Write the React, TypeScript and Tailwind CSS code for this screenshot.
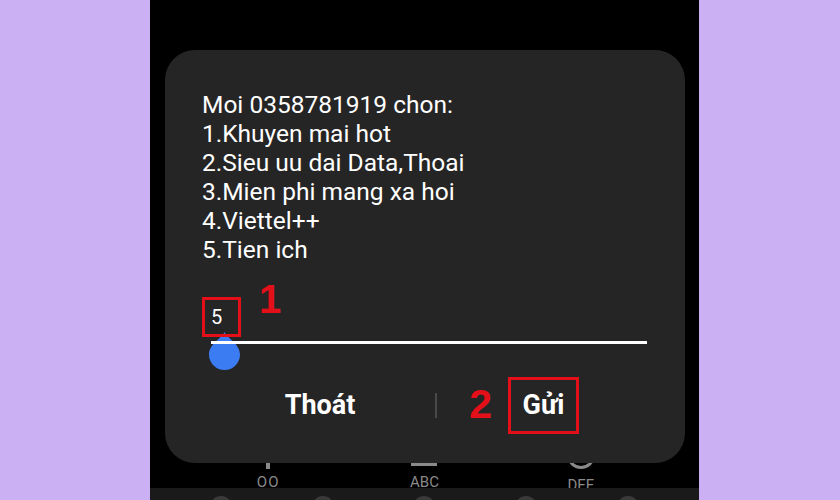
import React from "react";

const lines = [
  "Moi 0358781919 chon:",
  "1.Khuyen mai hot",
  "2.Sieu uu dai Data,Thoai",
  "3.Mien phi mang xa hoi",
  "4.Viettel++",
  "5.Tien ich",
];

function Thumb() {
  return (
    <svg
      className="absolute left-[44px] top-[35px]"
      width="31"
      height="38"
      viewBox="0 0 31 38"
    >
      <path
        d="M15.5 0 C18 6 31 12 31 22.5 A15.5 15.5 0 1 1 0 22.5 C0 12 13 6 15.5 0 Z"
        fill="#3b7cf2"
      />
    </svg>
  );
}

function UssdDialog() {
  return (
    <div
      className="h-[413px] rounded-[30px] bg-[#252525] text-white"
      style={{ fontFamily: "Roboto, 'Noto Sans', sans-serif" }}
    >
      <div className="pt-[40px] pl-[37px] text-[24.5px] leading-[29px]">
        {lines.map((l) => (
          <div key={l}>{l}</div>
        ))}
      </div>

      {/* input */}
      <div className="relative mt-[33px] h-[80px]">
        <div className="h-[40px] pt-[8px] pl-[46px] text-[20px] leading-[24px]">5</div>
        <Thumb />
        <div className="relative ml-[46px] mt-[4px] h-[3px] w-[436px] bg-white" />
        <div className="absolute left-[37px] top-0 h-[40px] w-[39px] border-[3px] border-[#e3101a]" />
        <div
          className="absolute left-[94px] top-[-18px] text-[40px] font-bold leading-[40px] text-[#e3101a]"
          style={{ fontFamily: "'Liberation Sans', Arial, sans-serif" }}
        >
          1
        </div>
      </div>

      {/* buttons */}
      <div className="flex h-[56px] items-center pl-[40px] text-[27px] font-bold">
        <div className="flex w-[230px] justify-center">Thoát</div>
        <div className="h-[25px] w-[1.5px] bg-[#4a4a4a]" />
        <div className="flex w-[214px] justify-center">
          <div className="relative flex h-[57px] w-[71px] items-center justify-center border-[3px] border-[#e3101a]">
            Gửi
            <div
              className="absolute right-full mr-[19px] mt-[-2px] text-[41px] font-bold leading-[41px] text-[#e3101a]"
              style={{ fontFamily: "'Liberation Sans', Arial, sans-serif" }}
            >
              2
            </div>
          </div>
        </div>
      </div>
    </div>
  );
}

export default function App() {
  return (
    <div className="flex h-[500px] w-[840px] overflow-hidden bg-[#cbb1f4]">
      <div className="w-[150px]" />
      <div className="flex w-[549px] flex-col overflow-hidden bg-black">
        <div className="pl-[15px] pr-[14px] pt-[50px]">
          <UssdDialog />
        </div>

        {/* dialer keys peeking below */}
        <div
          className="grid h-[25px] grid-cols-3 overflow-hidden px-[40px] text-[#8a8a8a]"
          style={{ fontFamily: "Roboto, sans-serif" }}
        >
          <div className="flex flex-col items-center">
            <div className="h-[6px] w-[4px] bg-[#8a8a8a]" />
            <div className="mt-[6px] text-[15px] leading-[15px] tracking-[1px]">OO</div>
          </div>
          <div className="flex flex-col items-center">
            <div className="h-[3px] w-[26px] bg-[#8a8a8a]" />
            <div className="mt-[9px] text-[15px] leading-[15px]">ABC</div>
          </div>
          <div className="flex flex-col items-center">
            <div className="mt-[-22px] h-[28px] w-[28px] rounded-full border-[3px] border-[#8a8a8a]" />
            <div className="mt-[9px] text-[15px] leading-[15px]">DEF</div>
          </div>
        </div>

        <div className="flex h-[12px] justify-around overflow-hidden bg-[#1a1a1a] px-[20px] pt-[8px]">
          {[0, 1, 2, 3, 4].map((i) => (
            <div key={i} className="h-[30px] w-[22px] rounded-full bg-[#3a3a3a]" />
          ))}
        </div>
      </div>
    </div>
  );
}
